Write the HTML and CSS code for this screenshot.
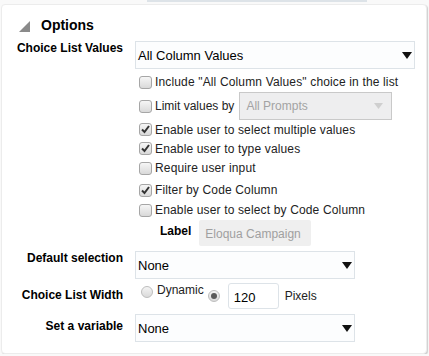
FILE: index.html
```
<!DOCTYPE html>
<html>
<head>
  <title>Prompt Options</title>
  <link rel="stylesheet" href="styles.css">
</head>
<body>
  <div class="tab-line"></div>
  <div class="panel">
    <div class="section-head">
      <svg class="twisty" width="11" height="11" viewBox="0 0 11 11"><polygon points="11,0 11,11 0,11" fill="#8a8a8a"/></svg>
      <span>Options</span>
    </div>

    <div class="row">
      <div class="row-label">Choice List Values</div>
      <div class="row-field">
        <div class="select wide">
          <span>All Column Values</span>
          <svg class="arrow" width="10" height="7" viewBox="0 0 10 7"><polygon points="0,0 10,0 5,7" fill="#111"/></svg>
        </div>
        <div class="checks">
          <div class="check"><span class="box"></span>Include "All Column Values" choice in the list</div>
          <div class="check limit">
            <span class="box"></span><span class="limit-text">Limit values by</span>
            <div class="select disabled">
              <span>All Prompts</span>
              <svg class="arrow" width="9" height="6" viewBox="0 0 9 6"><polygon points="0,0 9,0 4.5,6" fill="#cfcfcf"/></svg>
            </div>
          </div>
          <div class="check short"><span class="box on"><svg width="11" height="11" viewBox="0 0 11 11"><path d="M2 5.5 L4.5 8 L9 2" stroke="#333" stroke-width="2" fill="none"/></svg></span>Enable user to select multiple values</div>
          <div class="check short"><span class="box on"><svg width="11" height="11" viewBox="0 0 11 11"><path d="M2 5.5 L4.5 8 L9 2" stroke="#333" stroke-width="2" fill="none"/></svg></span>Enable user to type values</div>
          <div class="check"><span class="box"></span>Require user input</div>
          <div class="check gap"><span class="box on"><svg width="11" height="11" viewBox="0 0 11 11"><path d="M2 5.5 L4.5 8 L9 2" stroke="#333" stroke-width="2" fill="none"/></svg></span>Filter by Code Column</div>
          <div class="check"><span class="box"></span>Enable user to select by Code Column</div>
          <div class="code-label">
            <span class="small-label">Label</span>
            <div class="text-disabled">Eloqua Campaign</div>
          </div>
        </div>
      </div>
    </div>

    <div class="row sel-row">
      <div class="row-label">Default selection</div>
      <div class="row-field">
        <div class="select narrow">
          <span>None</span>
          <svg class="arrow" width="10" height="7" viewBox="0 0 10 7"><polygon points="0,0 10,0 5,7" fill="#111"/></svg>
        </div>
      </div>
    </div>

    <div class="row width-row">
      <div class="row-label pad">Choice List Width</div>
      <div class="row-field radios">
        <span class="radio first"></span>
        <span class="radio-text">Dynamic</span>
        <span class="radio second on"></span>
        <div class="num-input">120</div>
        <span class="unit">Pixels</span>
      </div>
    </div>

    <div class="row var-row">
      <div class="row-label pad">Set a variable</div>
      <div class="row-field">
        <div class="select narrow">
          <span>None</span>
          <svg class="arrow" width="10" height="7" viewBox="0 0 10 7"><polygon points="0,0 10,0 5,7" fill="#111"/></svg>
        </div>
      </div>
    </div>
  </div>
</body>
</html>
```

FILE: styles.css
```
body {
  margin: 0;
  background-color: #f9f9f9;
  font-family: "Liberation Sans", Arial, sans-serif;
  font-size: 12px;
  color: #222;
}
.tab-line {
  height: 2px;
  width: 220px;
  margin-left: 147px;
  background-color: #dde3e8;
}
.panel {
  margin: 2px 2px 0 1px;
  height: 348px;
  background-color: #fff;
  border: 1px solid #ececec;
  border-radius: 4px;
  box-shadow: 1px 1px 1px #cfcfcf;
}
.section-head {
  display: flex;
  align-items: center;
  height: 16px;
  margin-top: 12px;
  padding-left: 17px;
  font-size: 14px;
  font-weight: bold;
  color: #000;
}
.twisty {
  margin-right: 11px;
  margin-top: 2px;
}
.row {
  display: flex;
}
.section-head + .row {
  margin-top: 8px;
}
.row-label {
  width: 121px;
  flex: none;
  margin-right: 12px;
  text-align: right;
  font-weight: bold;
  color: #000;
  line-height: 14px;
}
.row-label.pad {
  padding-top: 5px;
}
.row-field {
  flex: 1;
}
.select {
  display: flex;
  align-items: center;
  justify-content: space-between;
  box-sizing: border-box;
  height: 28px;
  padding: 0 2px 0 2px;
  border: 1px solid #dde3e8;
  background-color: #fcfdfe;
  font-size: 13px;
  color: #000;
}
.select.wide {
  width: 280px;
}
.select.narrow {
  width: 220px;
}
.limit-text {
  letter-spacing: 0;
}
.select.disabled {
  width: 153px;
  height: 28px;
  margin-left: 5px;
  padding: 0 8px 0 6px;
  border-color: #c9c9c9;
  background-color: #eeeeef;
  font-size: 12px;
  letter-spacing: 0;
  color: #a3a3a3;
}
.checks {
  margin-top: 3px;
  padding-left: 4px;
}
.check {
  display: flex;
  align-items: center;
  height: 20px;
  letter-spacing: 0.15px;
}
.check.limit {
  height: 28px;
}
.check.short {
  height: 19px;
}
.check.gap {
  margin-top: 2px;
}
.box {
  display: inline-flex;
  align-items: center;
  justify-content: center;
  box-sizing: border-box;
  width: 13px;
  height: 13px;
  margin-right: 3px;
  border: 1px solid #a6a6a6;
  border-radius: 3px;
  background: linear-gradient(#f6f6f6, #d9d9d9);
}
.code-label {
  display: flex;
  align-items: center;
  height: 26px;
  padding-left: 21px;
  letter-spacing: 0;
}
.small-label {
  font-weight: bold;
  color: #000;
  margin-right: 8px;
  margin-top: -5px;
}
.text-disabled {
  width: 112px;
  height: 26px;
  box-sizing: border-box;
  padding: 7px 0 0 6px;
  background-color: #efefef;
  border-radius: 2px;
  color: #a0a0a0;
}
.sel-row {
  margin-top: 5px;
}
.width-row {
  margin-top: 4px;
}
.var-row {
  margin-top: 5px;
}
.radios {
  display: flex;
  align-items: flex-start;
  height: 26px;
}
.radio {
  box-sizing: border-box;
  width: 12px;
  height: 12px;
  border: 1px solid #bdbdbd;
  border-radius: 50%;
  background: linear-gradient(#f4f4f4, #dadada);
  position: relative;
}
.radio.first {
  margin: 3px 0 0 6px;
}
.radio-text {
  margin-left: 4px;
  line-height: 14px;
}
.radio.second {
  margin: 7px 0 0 4px;
}
.radio.on::after {
  content: "";
  position: absolute;
  left: 2px;
  top: 2px;
  width: 6px;
  height: 6px;
  border-radius: 50%;
  background-color: #5a5a5a;
}
.num-input {
  box-sizing: border-box;
  width: 51px;
  height: 26px;
  margin-left: 8px;
  padding: 6px 0 0 5px;
  border: 1px solid #dde3e8;
  border-radius: 3px;
  font-size: 13px;
  color: #000;
}
.unit {
  margin-left: 6px;
  margin-top: 6px;
  line-height: 14px;
}
```
